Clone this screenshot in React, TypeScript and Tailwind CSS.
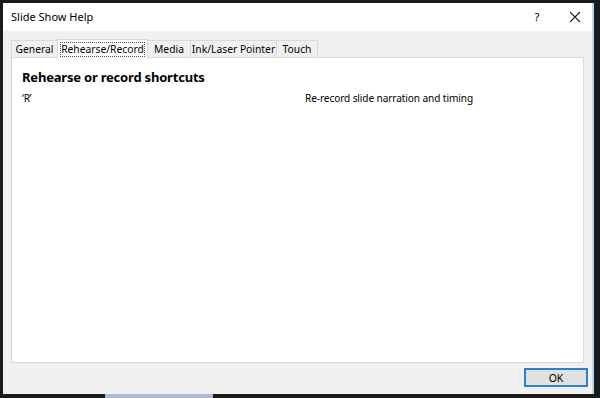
import React from "react";

const tabs = [
  { label: "General", w: "w-[47px]" },
  { label: "Rehearse/Record", w: "w-[91px]" },
  { label: "Media", w: "w-[43px]" },
  { label: "Ink/Laser Pointer", w: "w-[86px]" },
  { label: "Touch", w: "w-[41px]" },
];

export default function App() {
  const active = 1;

  return (
    <div
      className="w-[600px] h-[398px] bg-[#1b1b1b] flex flex-col overflow-hidden"
      style={{ fontFamily: '"Noto Sans", "Open Sans", sans-serif' }}
    >
      <div className="flex pt-[3px] pl-[3px] pr-[6px] h-[394px]">
        {/* Dialog window */}
        <div className="flex-1 flex flex-col bg-[#f0f0f0] border-r-2 border-[#b9d7ea]">
          {/* Title bar */}
          <div className="h-[28px] bg-white flex items-center pl-[8px] text-[11px] text-black shrink-0">
            <span className="flex-1 pt-[1px]">Slide Show Help</span>
            <span className="w-[20px] text-center mr-[22px] text-[11.5px]">?</span>
            <svg width="12" height="12" viewBox="0 0 12 12" className="mr-[11px]">
              <path d="M1 1 L11 11 M11 1 L1 11" stroke="#222" strokeWidth="1.1" />
            </svg>
          </div>

          {/* Tabs */}
          <div className="flex items-end pl-[8px] pt-[8px] h-[26px] shrink-0">
            {tabs.map((t, i) =>
              i === active ? (
                <div
                  key={t.label}
                  className={`${t.w} h-[19px] bg-white border border-b-0 border-[#d9d9d9] px-[2px] pt-[2px] -mb-px -ml-px relative z-10`}
                >
                  <span className="block border border-dotted border-[#555] text-center leading-[13px] text-[10.3px] text-black">
                    {t.label}
                  </span>
                </div>
              ) : (
                <div
                  key={t.label}
                  className={`${t.w} h-[17px] bg-[#f0f0f0] border-t border-r first:border-l border-[#d9d9d9] text-center text-[10.3px] leading-[17px] text-black`}
                >
                  {t.label}
                </div>
              )
            )}
          </div>

          {/* Panel */}
          <div className="mx-[8px] h-[306px] bg-white border border-[#d9d9d9] px-[10px] pt-[11px] shrink-0">
            <div className="text-[13px] font-bold text-black leading-[17px] tracking-[-0.2px]">
              Rehearse or record shortcuts
            </div>
            <div className="flex text-[10.1px] tracking-[-0.1px] text-black mt-[5px] leading-[14px]">
              <span className="w-[283px]">‘R’</span>
              <span>Re-record slide narration and timing</span>
            </div>
          </div>

          {/* Footer */}
          <div className="flex justify-end pr-[4px] pt-[5px]">
            <button className="w-[64px] h-[19px] bg-[#e1e1e1] border-2 border-[#2f7fd0] text-[10.5px] leading-[14px] text-black">
              OK
            </button>
          </div>
        </div>
      </div>
      <div className="flex h-[4px]">
        <div className="w-[105px]" />
        <div className="w-[108px] bg-[#aebccb]" />
      </div>
    </div>
  );
}
